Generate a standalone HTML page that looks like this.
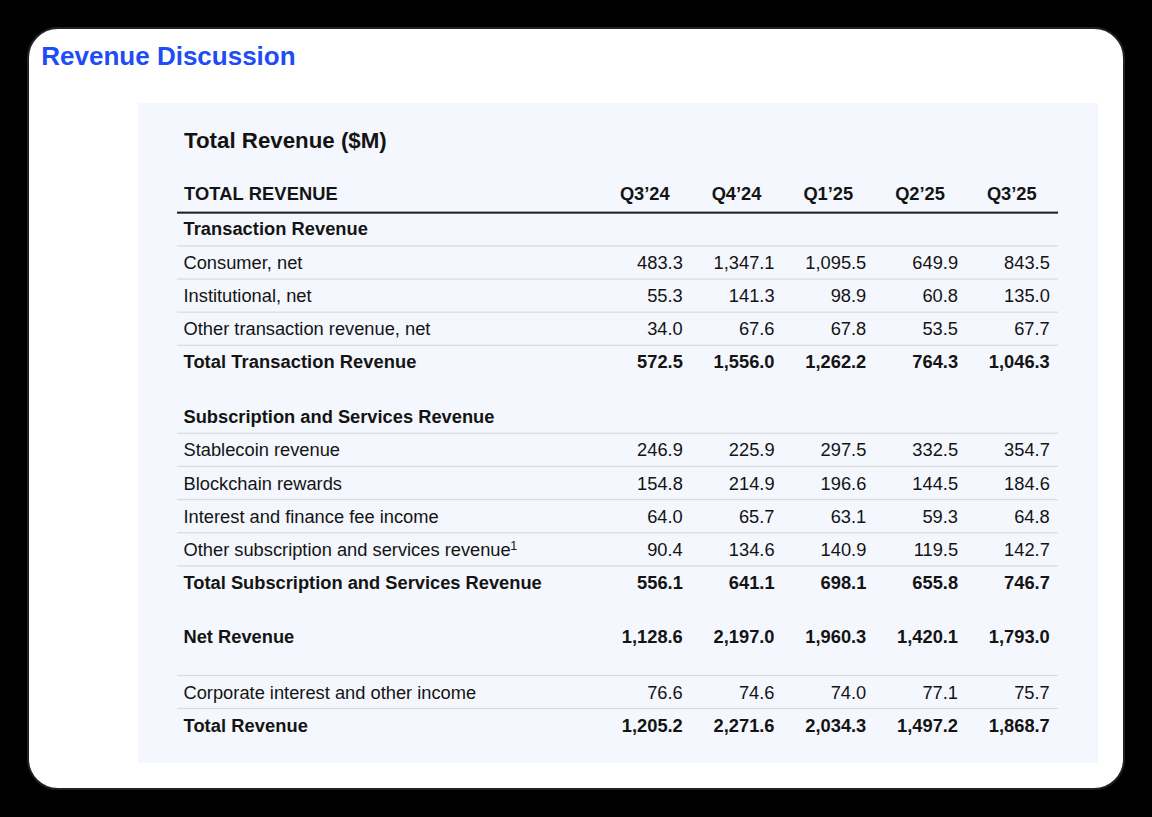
<!DOCTYPE html>
<html><head><meta charset="utf-8"><style>
html,body{margin:0;padding:0;}
body{width:1152px;height:817px;background:#000;position:relative;overflow:hidden;font-family:"Liberation Sans",sans-serif;color:#141414;}
.card{position:absolute;left:27px;top:27px;width:1094px;height:759px;background:#fff;border:2px solid #222;border-radius:31px;}
.panel{position:absolute;left:138px;top:103px;width:959.5px;height:660px;background:#f4f7fd;}
.t{position:absolute;white-space:nowrap;line-height:1;}
.b{font-weight:bold;}
.n{text-align:right;width:100px;}
.h{text-align:center;width:100px;}
svg{position:absolute;left:0;top:0;}
</style></head><body>
<div class="card"></div>
<div class="panel"></div>
<div class="t b" style="left:41.30px;top:43px;font-size:26px;color:#1e4cf5;">Revenue Discussion</div>
<div class="t b" style="left:184.00px;top:130px;font-size:22.3px;">Total Revenue ($M)</div>
<div class="t b" style="left:184.00px;top:185px;font-size:18.3px;letter-spacing:0.12px;">TOTAL REVENUE</div>
<div class="t b h" style="left:594.80px;top:185px;font-size:18.3px;">Q3’24</div>
<div class="t b h" style="left:686.55px;top:185px;font-size:18.3px;">Q4’24</div>
<div class="t b h" style="left:778.30px;top:185px;font-size:18.3px;">Q1’25</div>
<div class="t b h" style="left:870.05px;top:185px;font-size:18.3px;">Q2’25</div>
<div class="t b h" style="left:961.80px;top:185px;font-size:18.3px;">Q3’25</div>
<svg width="1152" height="817" viewBox="0 0 1152 817"><rect x="177" y="211.65" width="881" height="2" fill="#1c1c1e"/><rect x="177" y="245.25" width="881" height="1.25" fill="#dbdbdc"/><rect x="177" y="278.40" width="881" height="1.25" fill="#dbdbdc"/><rect x="177" y="311.55" width="881" height="1.25" fill="#dbdbdc"/><rect x="177" y="344.70" width="881" height="1.25" fill="#dbdbdc"/><rect x="177" y="432.65" width="881" height="1.25" fill="#dbdbdc"/><rect x="177" y="465.80" width="881" height="1.25" fill="#dbdbdc"/><rect x="177" y="498.95" width="881" height="1.25" fill="#dbdbdc"/><rect x="177" y="532.10" width="881" height="1.25" fill="#dbdbdc"/><rect x="177" y="565.25" width="881" height="1.25" fill="#dbdbdc"/><rect x="177" y="674.85" width="881" height="1.25" fill="#dbdbdc"/><rect x="177" y="707.85" width="881" height="1.25" fill="#dbdbdc"/></svg>
<div class="t b" style="left:183.50px;top:220px;font-size:18.3px;letter-spacing:0.03px;">Transaction Revenue</div>
<div class="t " style="left:183.50px;top:254px;font-size:18.3px;">Consumer, net</div>
<div class="t  n" style="left:582.80px;top:254px;font-size:18.3px;">483.3</div>
<div class="t  n" style="left:674.55px;top:254px;font-size:18.3px;">1,347.1</div>
<div class="t  n" style="left:766.30px;top:254px;font-size:18.3px;">1,095.5</div>
<div class="t  n" style="left:858.05px;top:254px;font-size:18.3px;">649.9</div>
<div class="t  n" style="left:949.80px;top:254px;font-size:18.3px;">843.5</div>
<div class="t " style="left:183.50px;top:287px;font-size:18.3px;">Institutional, net</div>
<div class="t  n" style="left:582.80px;top:287px;font-size:18.3px;">55.3</div>
<div class="t  n" style="left:674.55px;top:287px;font-size:18.3px;">141.3</div>
<div class="t  n" style="left:766.30px;top:287px;font-size:18.3px;">98.9</div>
<div class="t  n" style="left:858.05px;top:287px;font-size:18.3px;">60.8</div>
<div class="t  n" style="left:949.80px;top:287px;font-size:18.3px;">135.0</div>
<div class="t " style="left:183.50px;top:320px;font-size:18.3px;">Other transaction revenue, net</div>
<div class="t  n" style="left:582.80px;top:320px;font-size:18.3px;">34.0</div>
<div class="t  n" style="left:674.55px;top:320px;font-size:18.3px;">67.6</div>
<div class="t  n" style="left:766.30px;top:320px;font-size:18.3px;">67.8</div>
<div class="t  n" style="left:858.05px;top:320px;font-size:18.3px;">53.5</div>
<div class="t  n" style="left:949.80px;top:320px;font-size:18.3px;">67.7</div>
<div class="t b" style="left:183.50px;top:353px;font-size:18.3px;letter-spacing:0.07px;">Total Transaction Revenue</div>
<div class="t b n" style="left:582.80px;top:353px;font-size:18.3px;">572.5</div>
<div class="t b n" style="left:674.55px;top:353px;font-size:18.3px;">1,556.0</div>
<div class="t b n" style="left:766.30px;top:353px;font-size:18.3px;">1,262.2</div>
<div class="t b n" style="left:858.05px;top:353px;font-size:18.3px;">764.3</div>
<div class="t b n" style="left:949.80px;top:353px;font-size:18.3px;">1,046.3</div>
<div class="t b" style="left:183.50px;top:408px;font-size:18.3px;">Subscription and Services Revenue</div>
<div class="t " style="left:183.50px;top:441px;font-size:18.3px;">Stablecoin revenue</div>
<div class="t  n" style="left:582.80px;top:441px;font-size:18.3px;">246.9</div>
<div class="t  n" style="left:674.55px;top:441px;font-size:18.3px;">225.9</div>
<div class="t  n" style="left:766.30px;top:441px;font-size:18.3px;">297.5</div>
<div class="t  n" style="left:858.05px;top:441px;font-size:18.3px;">332.5</div>
<div class="t  n" style="left:949.80px;top:441px;font-size:18.3px;">354.7</div>
<div class="t " style="left:183.50px;top:475px;font-size:18.3px;">Blockchain rewards</div>
<div class="t  n" style="left:582.80px;top:475px;font-size:18.3px;">154.8</div>
<div class="t  n" style="left:674.55px;top:475px;font-size:18.3px;">214.9</div>
<div class="t  n" style="left:766.30px;top:475px;font-size:18.3px;">196.6</div>
<div class="t  n" style="left:858.05px;top:475px;font-size:18.3px;">144.5</div>
<div class="t  n" style="left:949.80px;top:475px;font-size:18.3px;">184.6</div>
<div class="t " style="left:183.50px;top:508px;font-size:18.3px;">Interest and finance fee income</div>
<div class="t  n" style="left:582.80px;top:508px;font-size:18.3px;">64.0</div>
<div class="t  n" style="left:674.55px;top:508px;font-size:18.3px;">65.7</div>
<div class="t  n" style="left:766.30px;top:508px;font-size:18.3px;">63.1</div>
<div class="t  n" style="left:858.05px;top:508px;font-size:18.3px;">59.3</div>
<div class="t  n" style="left:949.80px;top:508px;font-size:18.3px;">64.8</div>
<div class="t " style="left:183.50px;top:541px;font-size:18.3px;">Other subscription and services revenue</div>
<div class="t " style="left:510.20px;top:540px;font-size:12.5px;">1</div>
<div class="t  n" style="left:582.80px;top:541px;font-size:18.3px;">90.4</div>
<div class="t  n" style="left:674.55px;top:541px;font-size:18.3px;">134.6</div>
<div class="t  n" style="left:766.30px;top:541px;font-size:18.3px;">140.9</div>
<div class="t  n" style="left:858.05px;top:541px;font-size:18.3px;">119.5</div>
<div class="t  n" style="left:949.80px;top:541px;font-size:18.3px;">142.7</div>
<div class="t b" style="left:183.50px;top:574px;font-size:18.3px;">Total Subscription and Services Revenue</div>
<div class="t b n" style="left:582.80px;top:574px;font-size:18.3px;">556.1</div>
<div class="t b n" style="left:674.55px;top:574px;font-size:18.3px;">641.1</div>
<div class="t b n" style="left:766.30px;top:574px;font-size:18.3px;">698.1</div>
<div class="t b n" style="left:858.05px;top:574px;font-size:18.3px;">655.8</div>
<div class="t b n" style="left:949.80px;top:574px;font-size:18.3px;">746.7</div>
<div class="t b" style="left:183.50px;top:628px;font-size:18.3px;">Net Revenue</div>
<div class="t b n" style="left:582.80px;top:628px;font-size:18.3px;">1,128.6</div>
<div class="t b n" style="left:674.55px;top:628px;font-size:18.3px;">2,197.0</div>
<div class="t b n" style="left:766.30px;top:628px;font-size:18.3px;">1,960.3</div>
<div class="t b n" style="left:858.05px;top:628px;font-size:18.3px;">1,420.1</div>
<div class="t b n" style="left:949.80px;top:628px;font-size:18.3px;">1,793.0</div>
<div class="t " style="left:183.50px;top:684px;font-size:18.3px;">Corporate interest and other income</div>
<div class="t  n" style="left:582.80px;top:684px;font-size:18.3px;">76.6</div>
<div class="t  n" style="left:674.55px;top:684px;font-size:18.3px;">74.6</div>
<div class="t  n" style="left:766.30px;top:684px;font-size:18.3px;">74.0</div>
<div class="t  n" style="left:858.05px;top:684px;font-size:18.3px;">77.1</div>
<div class="t  n" style="left:949.80px;top:684px;font-size:18.3px;">75.7</div>
<div class="t b" style="left:183.50px;top:717px;font-size:18.3px;letter-spacing:0.07px;">Total Revenue</div>
<div class="t b n" style="left:582.80px;top:717px;font-size:18.3px;">1,205.2</div>
<div class="t b n" style="left:674.55px;top:717px;font-size:18.3px;">2,271.6</div>
<div class="t b n" style="left:766.30px;top:717px;font-size:18.3px;">2,034.3</div>
<div class="t b n" style="left:858.05px;top:717px;font-size:18.3px;">1,497.2</div>
<div class="t b n" style="left:949.80px;top:717px;font-size:18.3px;">1,868.7</div>
</body></html>
